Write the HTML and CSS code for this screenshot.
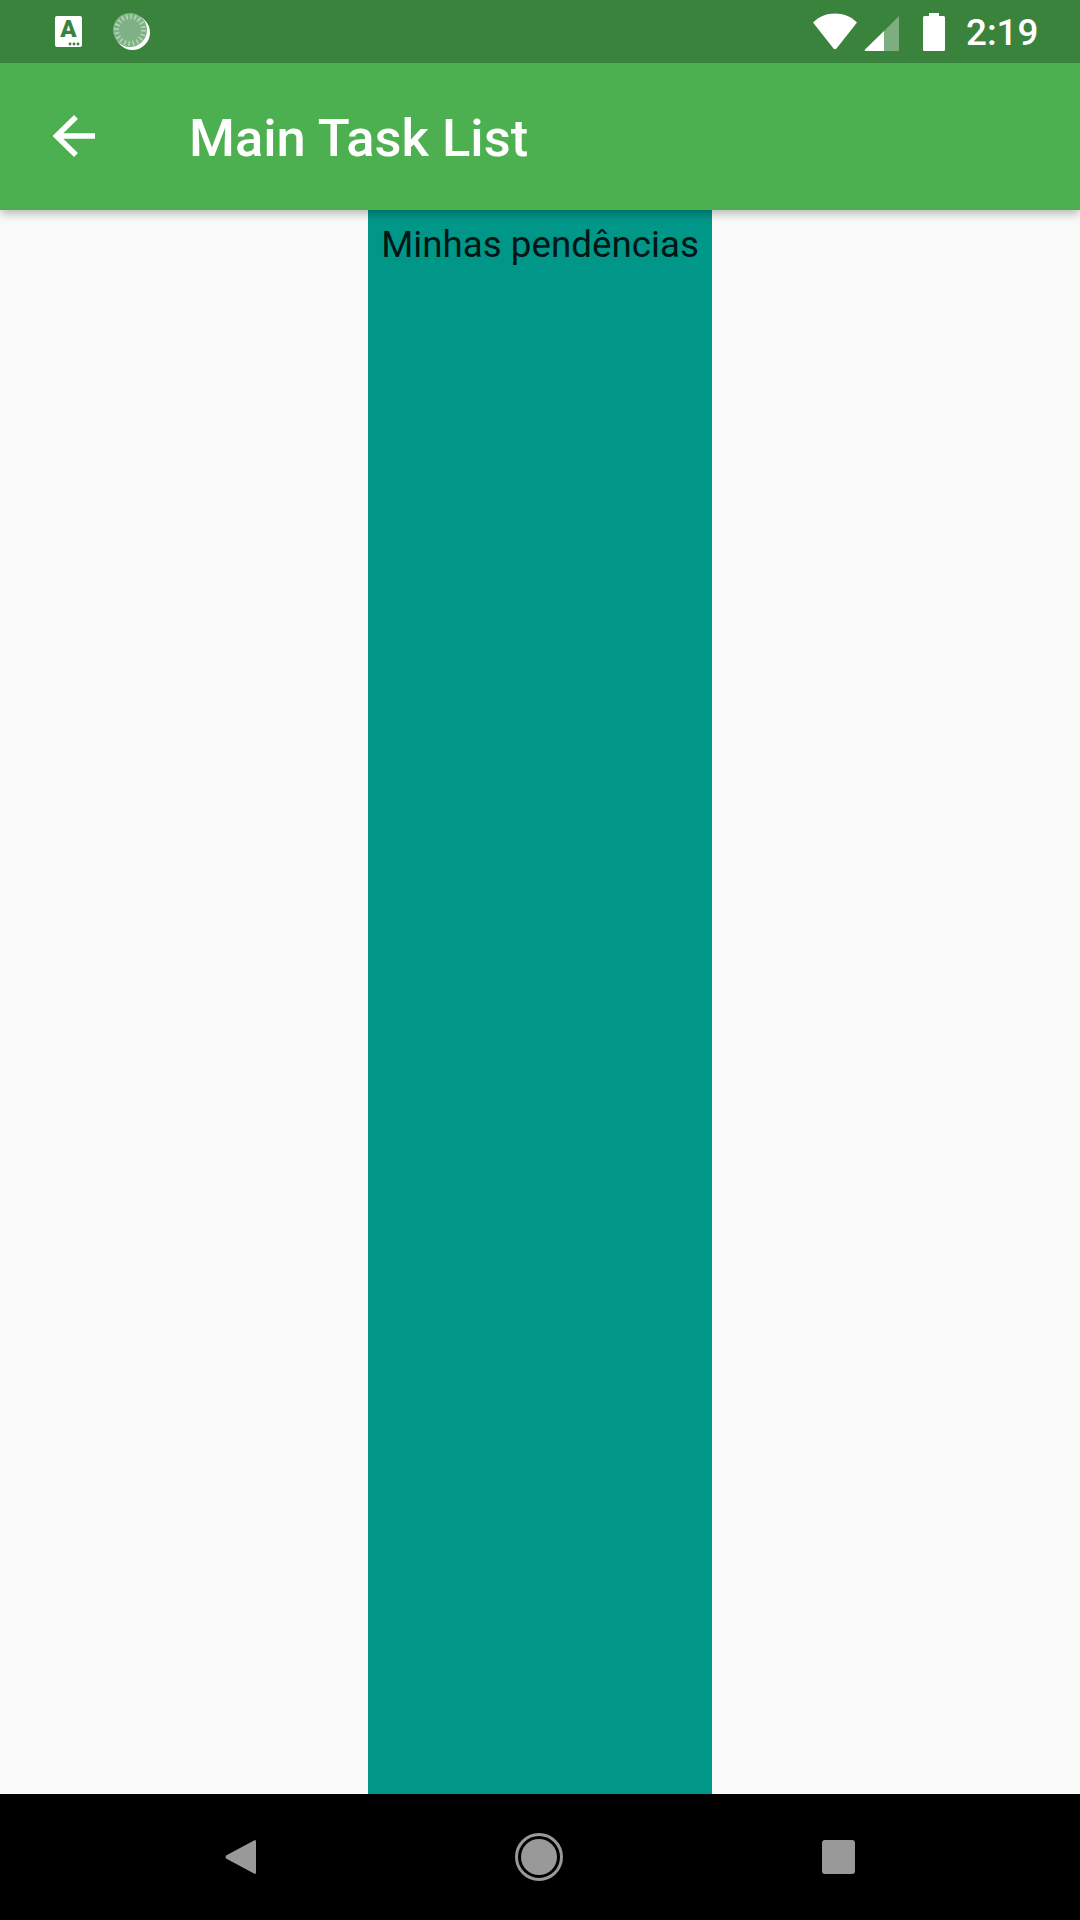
FILE: index.html
```html
<!DOCTYPE html>
<html lang="pt-BR">
<head>
  <meta charset="UTF-8">
  <title>Main Task List</title>
  <link rel="stylesheet" href="styles.css">
</head>
<body>
  <header class="topo">
    <div class="status-bar">
      <div class="notif-icon">
        <span class="notif-letra">A</span>
        <svg class="notif-dots" width="12" height="4" viewBox="0 0 12 4">
          <circle cx="2" cy="2" r="1.4"/><circle cx="6" cy="2" r="1.4"/><circle cx="10" cy="2" r="1.4"/>
        </svg>
      </div>
      <svg class="spinner" width="38" height="38" viewBox="0 0 38 38">
        <circle cx="19.500" cy="19.500" r="17.500" fill="#fff"/>
        <circle cx="17" cy="17" r="17" fill="#7eb183"/>
        <circle cx="17" cy="17" r="13.500" fill="none" stroke="#bcd6be" stroke-width="5" stroke-dasharray="1.5 2.74"/>
      </svg>
      <div class="status-dir">
        <svg width="44" height="37" viewBox="0 0 44 37">
          <path d="M0 9.5C6 3.5 13.500 0.500 22 0.500S38 3.500 44 9.500L23.500 35.500Q22 37 20.500 35.500Z" fill="#fff"/>
        </svg>
        <svg class="sinal" width="35" height="36" viewBox="0 0 35 36">
          <path d="M35 1V34.500Q35 36 33.500 36H20V16Z" fill="#fff" fill-opacity=".35"/>
          <path d="M20 16V36H1.500Q0 36 1 34.500Z" fill="#fff"/>
        </svg>
        <svg class="bateria" width="22" height="38" viewBox="0 0 22 38">
          <path d="M6 0H16V3H20.500Q22 3 22 4.500V36.500Q22 38 20.500 38H1.500Q0 38 0 36.500V4.500Q0 3 1.500 3H6Z" fill="#fff"/>
        </svg>
        <span class="hora">2:19</span>
      </div>
    </div>
    <div class="app-bar">
      <svg class="voltar" width="42" height="42" viewBox="0 0 42 42">
        <path d="M42 21H3.500M23 2L3.500 21L23 40" fill="none" stroke="#fff" stroke-width="5.500"/>
      </svg>
      <h1>Main Task List</h1>
    </div>
  </header>

  <main class="conteudo">
    <div class="coluna">Minhas pendências</div>
  </main>

  <nav class="nav-bar">
    <svg width="31" height="36" viewBox="0 0 31 36">
      <path d="M29 1.500Q31 0 31 3V33Q31 36 29 34.500L1 19.500Q0 18 1 16.500Z" fill="#999"/>
    </svg>
    <svg width="48" height="48" viewBox="0 0 48 48">
      <circle cx="24" cy="24" r="22.500" fill="none" stroke="#999" stroke-width="3"/>
      <circle cx="24" cy="24" r="18" fill="#999"/>
    </svg>
    <div class="nav-quadrado"></div>
  </nav>
</body>
</html>
```

FILE: styles.css
```css
* { box-sizing: border-box; }
body { margin: 0; height: 1920px; display: flex; flex-direction: column; font-family: Roboto, sans-serif; background: #fafafa; }

.topo { position: relative; z-index: 1; background: #4caf50; box-shadow: 0 3px 10px rgba(0, 0, 0, .3); }

.status-bar { height: 63px; background: #39833c; display: flex; align-items: center; padding-left: 55px; padding-right: 43px; }
.notif-icon { width: 27px; height: 31px; background: #fff; border-radius: 2px; position: relative; display: flex; justify-content: center; color: #39833c; }
.notif-letra { font-size: 24px; font-weight: 900; line-height: 27px; }
.notif-dots { position: absolute; right: 2px; bottom: 1px; fill: #39833c; }
.spinner { margin-left: 31px; margin-top: 1px; }
.status-dir { margin-left: auto; display: flex; align-items: center; color: #fff; }
.sinal { margin-left: 7px; margin-top: 2px; }
.bateria { margin-left: 24px; }
.hora { margin-left: 21px; font-size: 36.75px; font-weight: 500; width: 71px; line-height: 38px; padding-top: 3px; white-space: nowrap; }

.app-bar { height: 147px; display: flex; align-items: center; padding-left: 53px; }
.voltar { margin-top: -1px; }
.app-bar h1 { margin: 2px 0 0 94px; color: #fff; font-size: 52.5px; font-weight: 500; white-space: nowrap; }

.conteudo { flex: 1; display: flex; justify-content: center; }
.coluna { background: #009688; padding: 13px 13px 0; font-size: 36.75px; line-height: 43px; color: rgba(0, 0, 0, .87); white-space: nowrap; }

.nav-bar { height: 126px; background: #000; display: flex; align-items: center; gap: 259px; padding-left: 225px; }
.nav-quadrado { width: 33px; height: 34px; background: #999; border-radius: 3px; }
```
